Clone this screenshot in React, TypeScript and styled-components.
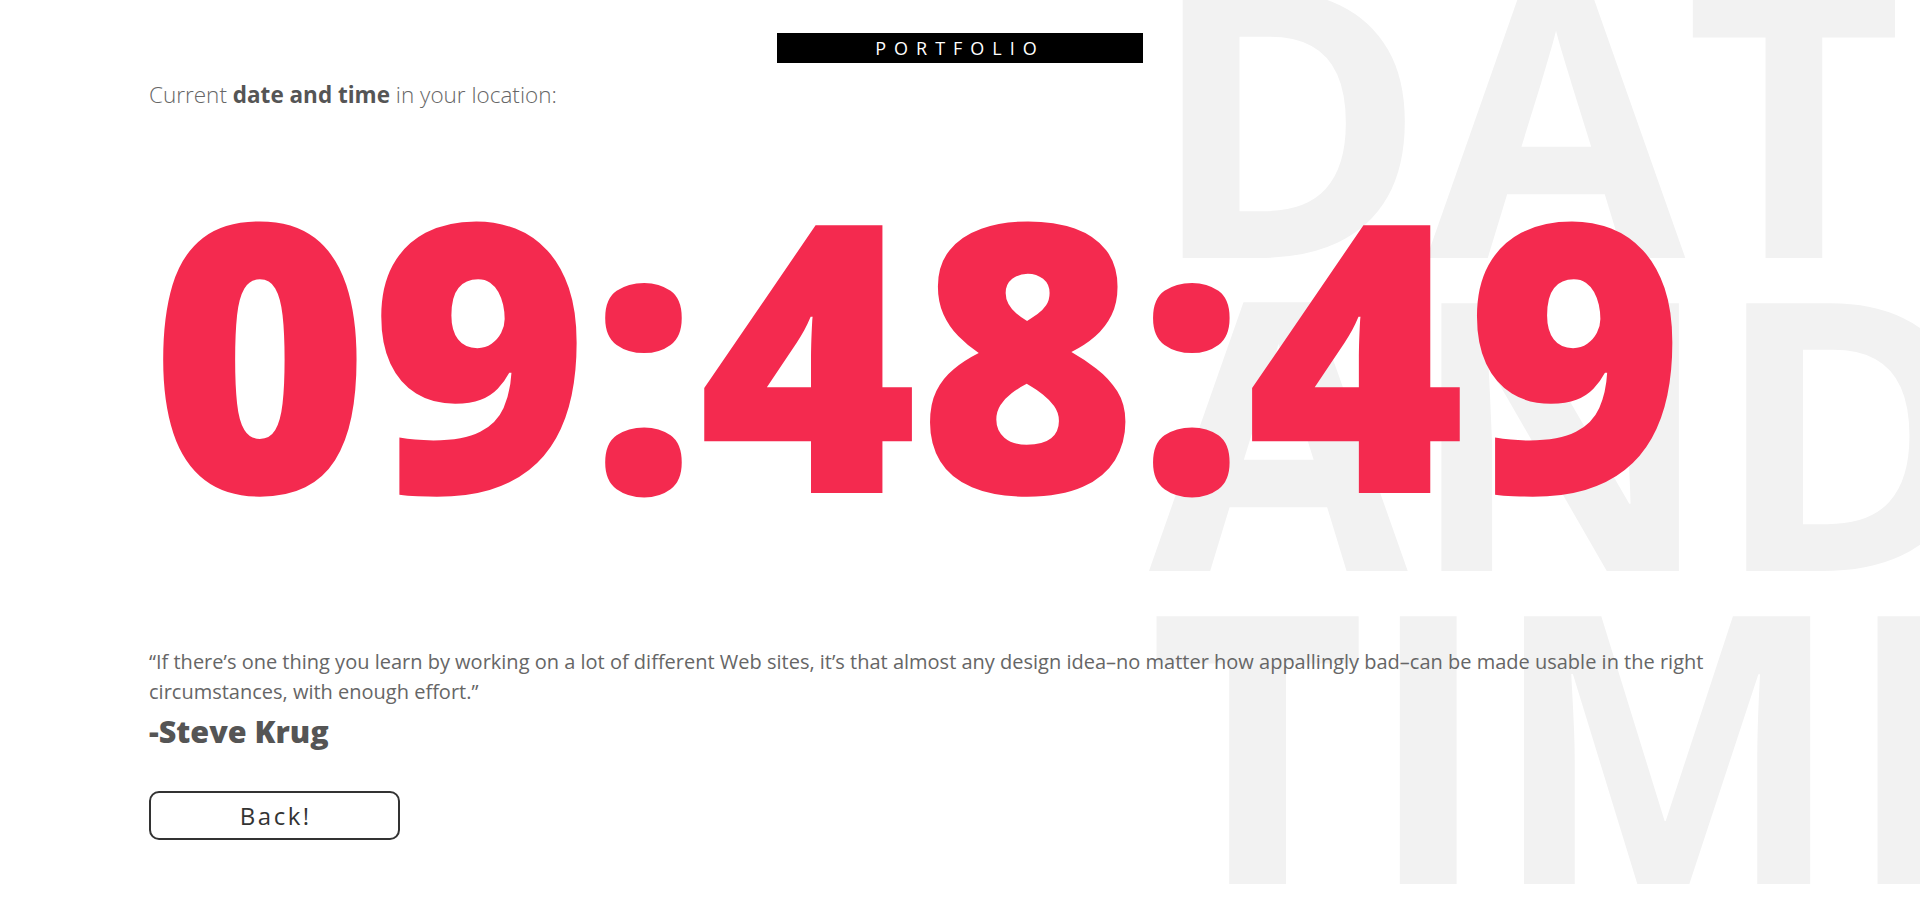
import React from "react";
import styled, { createGlobalStyle } from "styled-components";

const GlobalStyle = createGlobalStyle`
  html, body {
    margin: 0;
    padding: 0;
    background: #ffffff;
  }
  body {
    font-family: "Open Sans", "Liberation Sans", sans-serif;
  }
  * {
    box-sizing: border-box;
  }
`;

const Page = styled.div`
  position: relative;
  width: 100%;
  height: 100vh;
  overflow: hidden;
  background: #ffffff;
`;

// the huge grey words that sit behind everything on the right
const BackdropWords = styled.div`
  position: absolute;
  top: -44px;
  left: 1149px;
  width: min-content;
  font-size: 375px;
  line-height: 313px;
  font-weight: 700;
  color: #f2f2f2;
  user-select: none;
  pointer-events: none;
  z-index: 0;
`;

const Content = styled.main`
  position: relative;
  z-index: 1;
  display: flex;
  flex-direction: column;
  align-items: flex-start;
  padding: 33px 149px 0;
`;

const Badge = styled.div`
  align-self: center;
  display: flex;
  align-items: center;
  justify-content: center;
  width: 366px;
  height: 30px;
  background: #000000;
  color: #ffffff;
  font-size: 18px;
  letter-spacing: 8px;
  text-transform: uppercase;
`;

const Intro = styled.p`
  margin: 17px 0 0;
  font-size: 22.5px;
  line-height: 30px;
  font-weight: 300;
  color: #666666;

  b {
    font-weight: 700;
    color: #555555;
  }
`;

const Clock = styled.div`
  margin-top: 88px;
  margin-left: 1px;
  font-size: 375px;
  line-height: 300px;
  font-weight: 800;
  color: #f42a4f;
  white-space: nowrap;
`;

const Quote = styled.blockquote`
  margin: 149px 0 0;
  font-size: 20px;
  line-height: 30px;
  font-weight: 400;
  color: #666666;
`;

const Author = styled.p`
  margin: 4px 0 0;
  font-size: 30.5px;
  line-height: 40px;
  font-weight: 800;
  color: #555555;
`;

const BackButton = styled.button`
  margin-top: 40px;
  width: 251px;
  height: 49px;
  border: 2px solid #333333;
  border-radius: 10px;
  background: #ffffff;
  color: #333333;
  font-family: "Open Sans", "Liberation Sans", sans-serif;
  font-size: 24px;
  letter-spacing: 2.5px;
  padding: 0 0 0 2.5px;
  cursor: pointer;
`;

const App: React.FC = () => {
  return (
    <Page>
      <GlobalStyle />
      <BackdropWords aria-hidden>DATE AND TIME</BackdropWords>
      <Content>
        <Badge>Portfolio</Badge>
        <Intro>
          Current <b>date and time</b> in your location:
        </Intro>
        <Clock>09:48:49</Clock>
        <Quote>
          “If there’s one thing you learn by working on a lot of different Web
          sites, it’s that almost any design idea–no matter how appallingly
          bad–can be made usable in the right circumstances, with enough
          effort.”
        </Quote>
        <Author>-Steve Krug</Author>
        <BackButton>Back!</BackButton>
      </Content>
    </Page>
  );
};

export default App;
